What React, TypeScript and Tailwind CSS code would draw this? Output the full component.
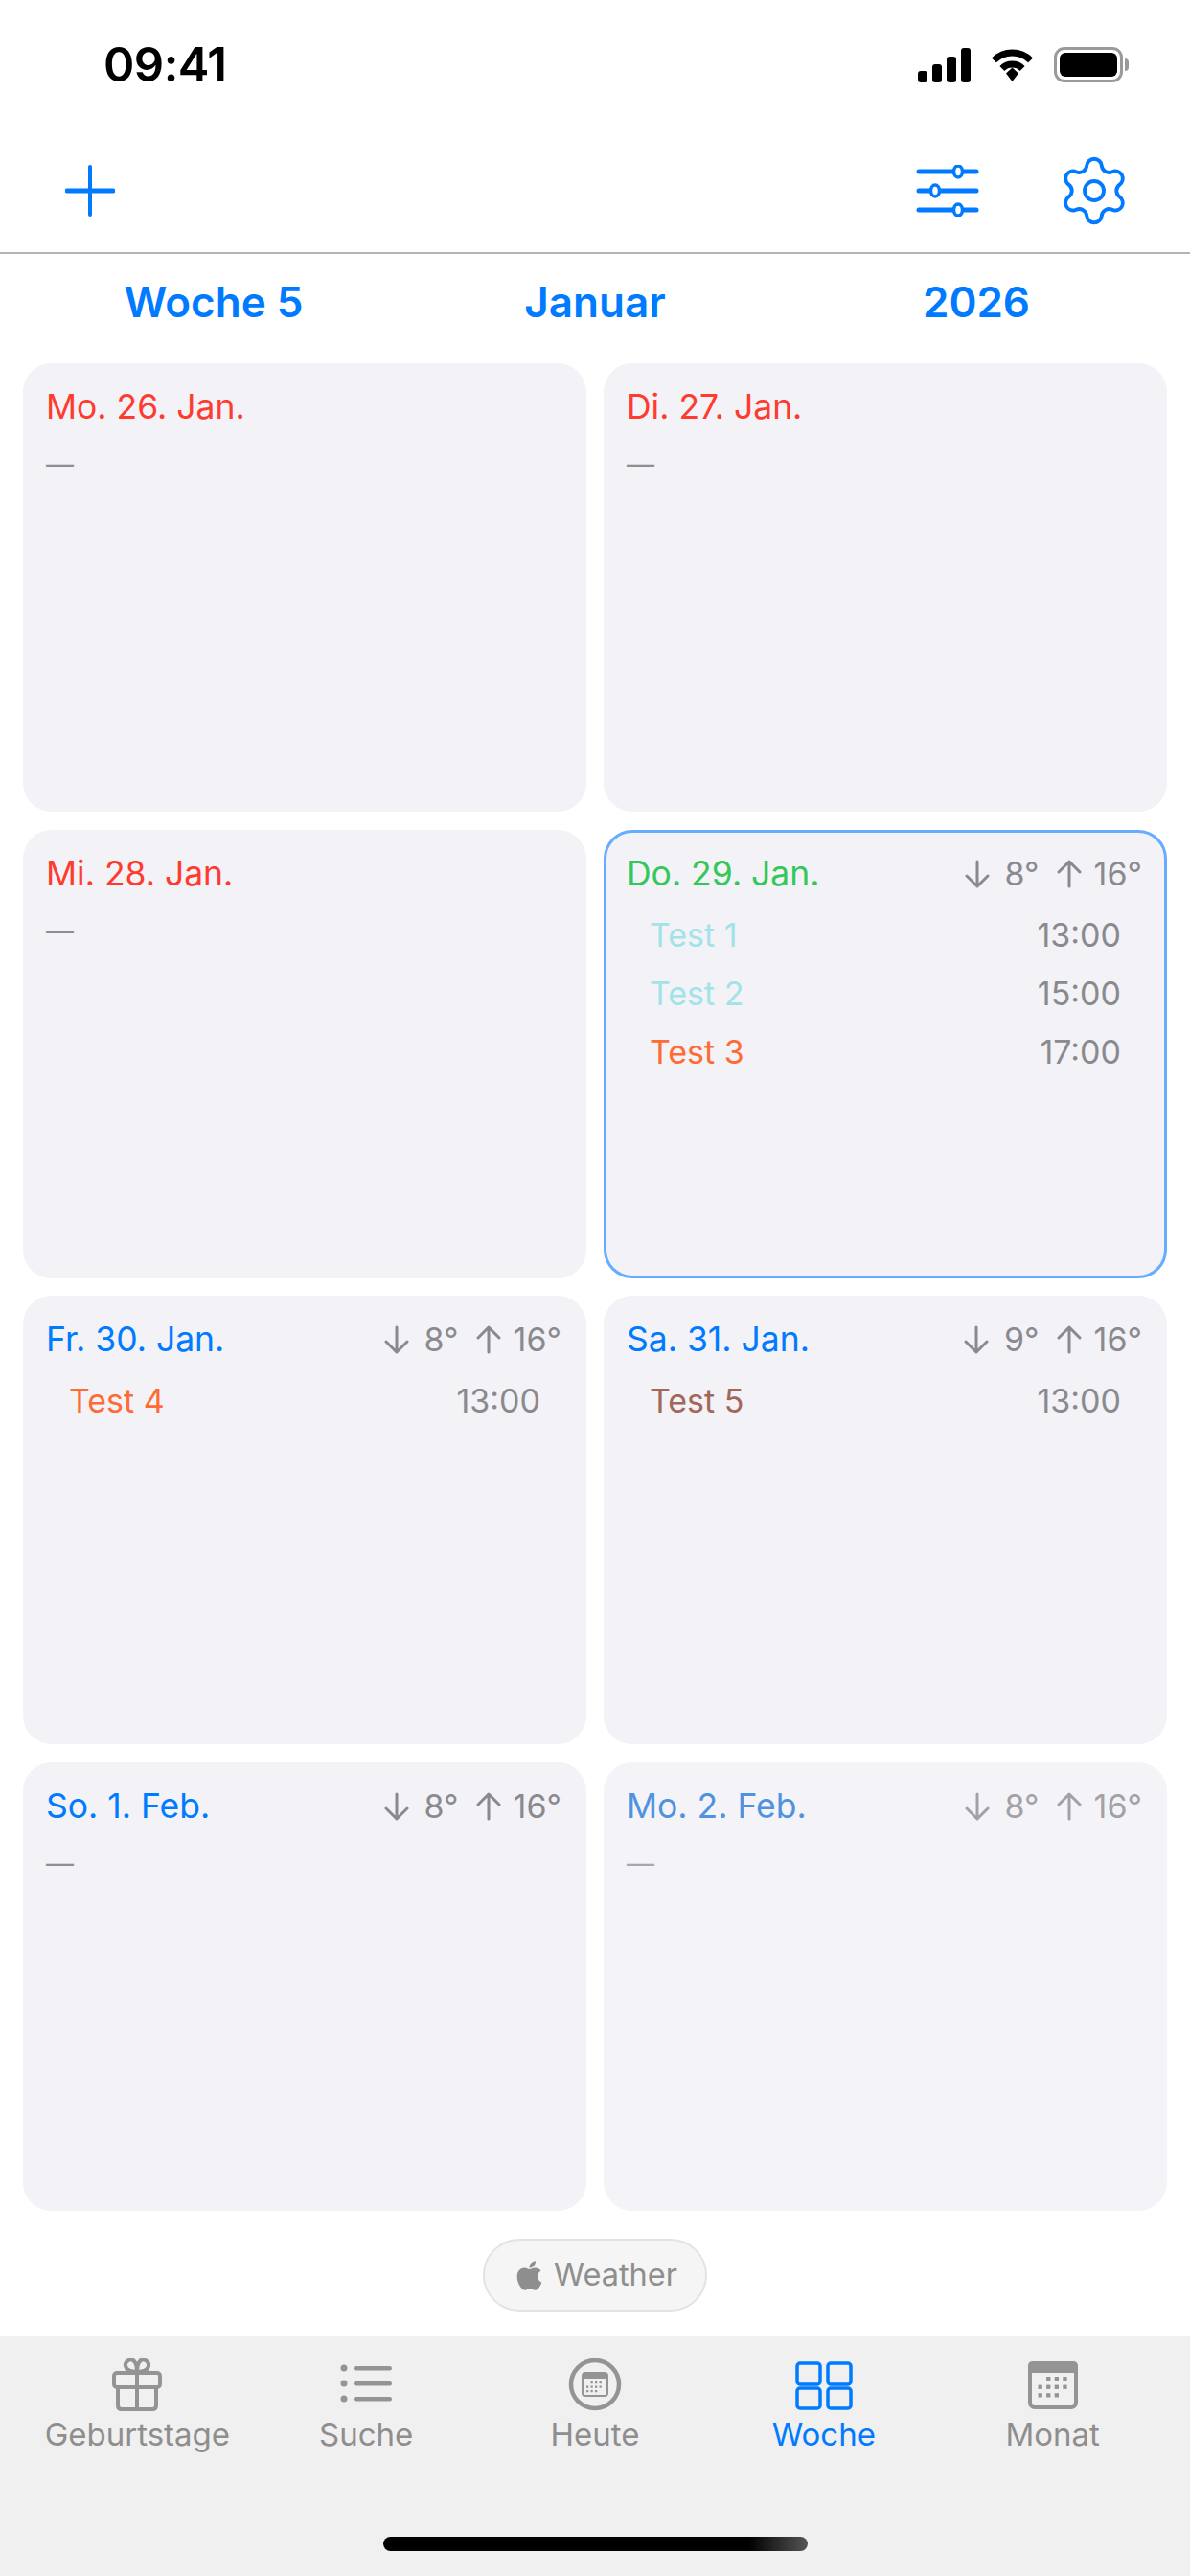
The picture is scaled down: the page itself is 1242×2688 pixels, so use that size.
import { Settings } from "lucide-react";
import { FaApple } from "react-icons/fa";

type EventItem = {
  name: string;
  time: string;
  color: string;
};

type Day = {
  label: string;
  labelColor: string;
  low?: string;
  high?: string;
  events?: EventItem[];
  selected?: boolean;
  faded?: boolean;
};

const days: Day[] = [
  { label: "Mo. 26. Jan.", labelColor: "text-[#ff3b30]" },
  { label: "Di. 27. Jan.", labelColor: "text-[#ff3b30]" },
  { label: "Mi. 28. Jan.", labelColor: "text-[#ff3b30]" },
  {
    label: "Do. 29. Jan.",
    labelColor: "text-[#34c759]",
    low: "8°",
    high: "16°",
    selected: true,
    events: [
      { name: "Test 1", time: "13:00", color: "text-[#a3e3e8]" },
      { name: "Test 2", time: "15:00", color: "text-[#a3e3e8]" },
      { name: "Test 3", time: "17:00", color: "text-[#ff6b35]" },
    ],
  },
  {
    label: "Fr. 30. Jan.",
    labelColor: "text-[#007aff]",
    low: "8°",
    high: "16°",
    events: [{ name: "Test 4", time: "13:00", color: "text-[#ff6b35]" }],
  },
  {
    label: "Sa. 31. Jan.",
    labelColor: "text-[#007aff]",
    low: "9°",
    high: "16°",
    events: [{ name: "Test 5", time: "13:00", color: "text-[#a2675a]" }],
  },
  { label: "So. 1. Feb.", labelColor: "text-[#007aff]", low: "8°", high: "16°" },
  { label: "Mo. 2. Feb.", labelColor: "text-[#4f93e0]", low: "8°", high: "16°", faded: true },
];

function StatusBar() {
  return (
    <div className="flex h-[94px] items-end justify-between pl-[108px] pr-[64px]">
      <span className="relative top-[2px] text-[49px] leading-[56px] font-semibold tracking-[-0.5px] text-black">
        09:41
      </span>
      <div className="mb-[8px] flex items-center">
        <svg width="56" height="36" viewBox="0 0 56 36" fill="#000">
          <rect x="0" y="24" width="10" height="12" rx="3" />
          <rect x="15" y="17" width="10" height="19" rx="3" />
          <rect x="30" y="9" width="10" height="27" rx="3" />
          <rect x="45" y="0" width="10" height="36" rx="3" />
        </svg>
        <svg className="ml-[19px]" width="47" height="36" viewBox="0 0 47 36" fill="none" stroke="#000">
          <path d="M4.4 12.9A27 27 0 0 1 42.6 12.9" strokeWidth="7" />
          <path d="M12.9 21.4A15 15 0 0 1 34.1 21.4" strokeWidth="7" />
          <path d="M17 26.5L23.5 20.5L30 26.5L23.5 35Z" fill="#000" stroke="none" />
        </svg>
        <div className="ml-[20px] flex items-center">
          <div className="flex h-[37px] w-[72px] items-stretch rounded-[11px] border-[3px] border-[#9a9a9a] bg-white p-[3px]">
            <div className="flex-1 rounded-[6px] bg-black" />
          </div>
          <div className="ml-[2px] h-[13px] w-[4px] rounded-r-full bg-[#9a9a9a]" />
        </div>
      </div>
    </div>
  );
}

function NavBar() {
  return (
    <div className="flex h-[171px] items-center justify-between border-b-2 border-[#b4b4b4] pt-[40px] pl-[68px] pr-[66px]">
      <svg width="52" height="54" viewBox="0 0 52 54" fill="none" stroke="#007aff" strokeLinecap="round">
        <path d="M26 2V52" strokeWidth="4" />
        <path d="M2 27H50" strokeWidth="5" />
      </svg>
      <div className="flex items-center gap-[86px]">
        <svg width="66" height="54" viewBox="0 0 66 54" fill="none" stroke="#007aff" strokeLinecap="round">
          <path d="M3 7H63M3 27H63M3 47H63" strokeWidth="5" />
          <path d="M44 2V12M20 22V32M44 42V52" stroke="#fff" strokeWidth="7" strokeLinecap="butt" />
          <ellipse cx="44" cy="7" rx="4.5" ry="6" fill="#fff" strokeWidth="3.5" />
          <ellipse cx="20" cy="27" rx="4.5" ry="6" fill="#fff" strokeWidth="3.5" />
          <ellipse cx="44" cy="47" rx="4.5" ry="6" fill="#fff" strokeWidth="3.5" />
        </svg>
        <Settings size={80} strokeWidth={1.15} color="#007aff" className="-mx-[6px]" />
      </div>
    </div>
  );
}

function TempArrow({ up }: { up?: boolean }) {
  return (
    <svg
      width="26"
      height="30"
      viewBox="0 0 26 30"
      fill="none"
      stroke="currentColor"
      strokeWidth="3"
      strokeLinecap="round"
      strokeLinejoin="round"
      className={up ? "ml-[18px] rotate-180" : ""}
    >
      <path d="M13 2V28M2 17L13 28L24 17" />
    </svg>
  );
}

function DayCard({ day }: { day: Day }) {
  const box = day.selected
    ? "border-[3px] border-[#66adff] px-[21px] pt-[21px]"
    : "px-[24px] pt-[24px]";
  return (
    <div className={`h-[468px] rounded-[30px] ${day.faded ? "bg-[#f4f4f8]" : "bg-[#f2f2f7]"} ${box}`}>
      <div className="flex h-[44px] items-center justify-between">
        <span className={`text-[35.5px] leading-[44px] ${day.labelColor}`}>{day.label}</span>
        {day.low ? (
          <span
            className={`flex items-center text-[34px] leading-[44px] ${
              day.faded ? "text-[#a2a2a6]" : "text-[#8a8a8e]"
            }`}
          >
            <TempArrow />
            <span className="ml-[16px]">{day.low}</span>
            <TempArrow up />
            <span className="ml-[13px] mr-[2px]">{day.high}</span>
          </span>
        ) : null}
      </div>
      {day.events ? (
        <div className="mt-[20px] flex flex-col gap-[17px] px-[24px]">
          {day.events.map((event) => (
            <div key={event.name} className="flex h-[44px] items-center justify-between text-[34px] leading-[44px]">
              <span className={event.color}>{event.name}</span>
              <span className="text-[#8a8a8e]">{event.time}</span>
            </div>
          ))}
        </div>
      ) : (
        <div className={`mt-[16px] text-[29px] leading-[44px] ${day.faded ? "text-[#a8a8ac]" : "text-[#8e8e93]"}`}>
          —
        </div>
      )}
    </div>
  );
}

function GiftIcon() {
  return (
    <svg width="52" height="56" viewBox="0 0 52 56" fill="none" stroke="#949494" strokeWidth="4">
      <rect x="2" y="16" width="48" height="15" rx="3" />
      <path d="M6 31V50Q6 54 10 54H42Q46 54 46 50V31M26 16V54" />
      <path d="M26 15C22 15 15 14 14 9C13 4 19 1 22 3C25 5 26 10 26 15C26 10 27 5 30 3C33 1 39 4 38 9C37 14 30 15 26 15Z" />
    </svg>
  );
}

function ListIcon() {
  return (
    <svg width="54" height="56" viewBox="0 0 54 56" fill="#949494">
      <circle cx="4" cy="11" r="3.5" />
      <circle cx="4" cy="27" r="3.5" />
      <circle cx="4" cy="43" r="3.5" />
      <rect x="14" y="9" width="40" height="4.5" rx="2.2" />
      <rect x="14" y="25" width="40" height="4.5" rx="2.2" />
      <rect x="14" y="41" width="40" height="4.5" rx="2.2" />
    </svg>
  );
}

function CalendarDots({ x, y, step }: { x: number; y: number; step: number }) {
  const cells = [
    [1, 0],
    [2, 0],
    [3, 0],
    [0, 1],
    [1, 1],
    [2, 1],
    [3, 1],
    [0, 2],
    [1, 2],
    [2, 2],
  ];
  return (
    <>
      {cells.map(([col, row]) => (
        <rect key={`${col}-${row}`} x={x + col * step} y={y + row * step} width={step / 2} height={step / 2} />
      ))}
    </>
  );
}

function TodayIcon() {
  return (
    <svg width="56" height="56" viewBox="0 0 56 56">
      <circle cx="28" cy="28" r="25" fill="none" stroke="#949494" strokeWidth="4.5" />
      <rect x="15" y="16" width="26" height="24" rx="3" fill="none" stroke="#949494" strokeWidth="2" />
      <rect x="15" y="16" width="26" height="6" fill="#949494" />
      <g fill="#949494">
        <CalendarDots x={19} y={25} step={4.5} />
      </g>
    </svg>
  );
}

function WeekIcon() {
  return (
    <svg width="60" height="56" viewBox="0 0 60 56" fill="none" stroke="#007aff" strokeWidth="3.5">
      <rect x="2" y="6" width="24" height="22" rx="3" />
      <rect x="34" y="6" width="24" height="22" rx="3" />
      <rect x="2" y="32" width="24" height="21" rx="3" />
      <rect x="34" y="32" width="24" height="21" rx="3" />
    </svg>
  );
}

function MonthIcon() {
  return (
    <svg width="52" height="56" viewBox="0 0 52 56">
      <rect x="2" y="6" width="48" height="46" rx="5" fill="none" stroke="#949494" strokeWidth="4" />
      <path d="M0 16V9Q0 4 5 4H47Q52 4 52 9V16Z" fill="#949494" />
      <g fill="#949494">
        <CalendarDots x={10.5} y={20} step={8.6} />
      </g>
    </svg>
  );
}

const tabs = [
  { label: "Geburtstage", icon: <GiftIcon /> },
  { label: "Suche", icon: <ListIcon /> },
  { label: "Heute", icon: <TodayIcon /> },
  { label: "Woche", icon: <WeekIcon />, active: true },
  { label: "Monat", icon: <MonthIcon /> },
];

export default function App() {
  return (
    <div className="flex h-[2688px] w-[1242px] flex-col bg-white font-['Inter',sans-serif]">
      <StatusBar />
      <NavBar />

      <div className="grid h-[114px] grid-cols-3 items-center px-[24px] pb-[14px] text-center text-[44px] font-semibold text-[#007aff]">
        <span>Woche 5</span>
        <span>Januar</span>
        <span>2026</span>
      </div>

      <div className="grid grid-cols-2 gap-x-[18px] gap-y-[18.5px] px-[24px]">
        {days.map((day) => (
          <DayCard key={day.label} day={day} />
        ))}
      </div>

      <div className="mt-[29.5px] flex justify-center">
        <div className="flex h-[76px] w-[234px] items-center justify-center gap-[8px] rounded-full border-2 border-[#e3e3e3] bg-[#f5f5f5] text-[32.5px] text-[#8e8e8e]">
          <FaApple size={35} color="#8e8e8e" />
          <span>Weather</span>
        </div>
      </div>

      <div className="mt-[26px] flex flex-1 flex-col bg-[#f0f0f0]">
        <div className="mt-[22px] grid grid-cols-5 px-[24px]">
          {tabs.map((tab) => (
            <div
              key={tab.label}
              className={`flex flex-col items-center ${tab.active ? "text-[#007aff]" : "text-[#8e8e8e]"}`}
            >
              {tab.icon}
              <span className="mt-[4px] text-[33px] leading-[40px]">{tab.label}</span>
            </div>
          ))}
        </div>
        <div className="mt-[87px] flex justify-center">
          <div className="h-[15px] w-[443px] rounded-full bg-[linear-gradient(to_right,#000_0%,#000_86%,#555_100%)]" />
        </div>
      </div>
    </div>
  );
}
